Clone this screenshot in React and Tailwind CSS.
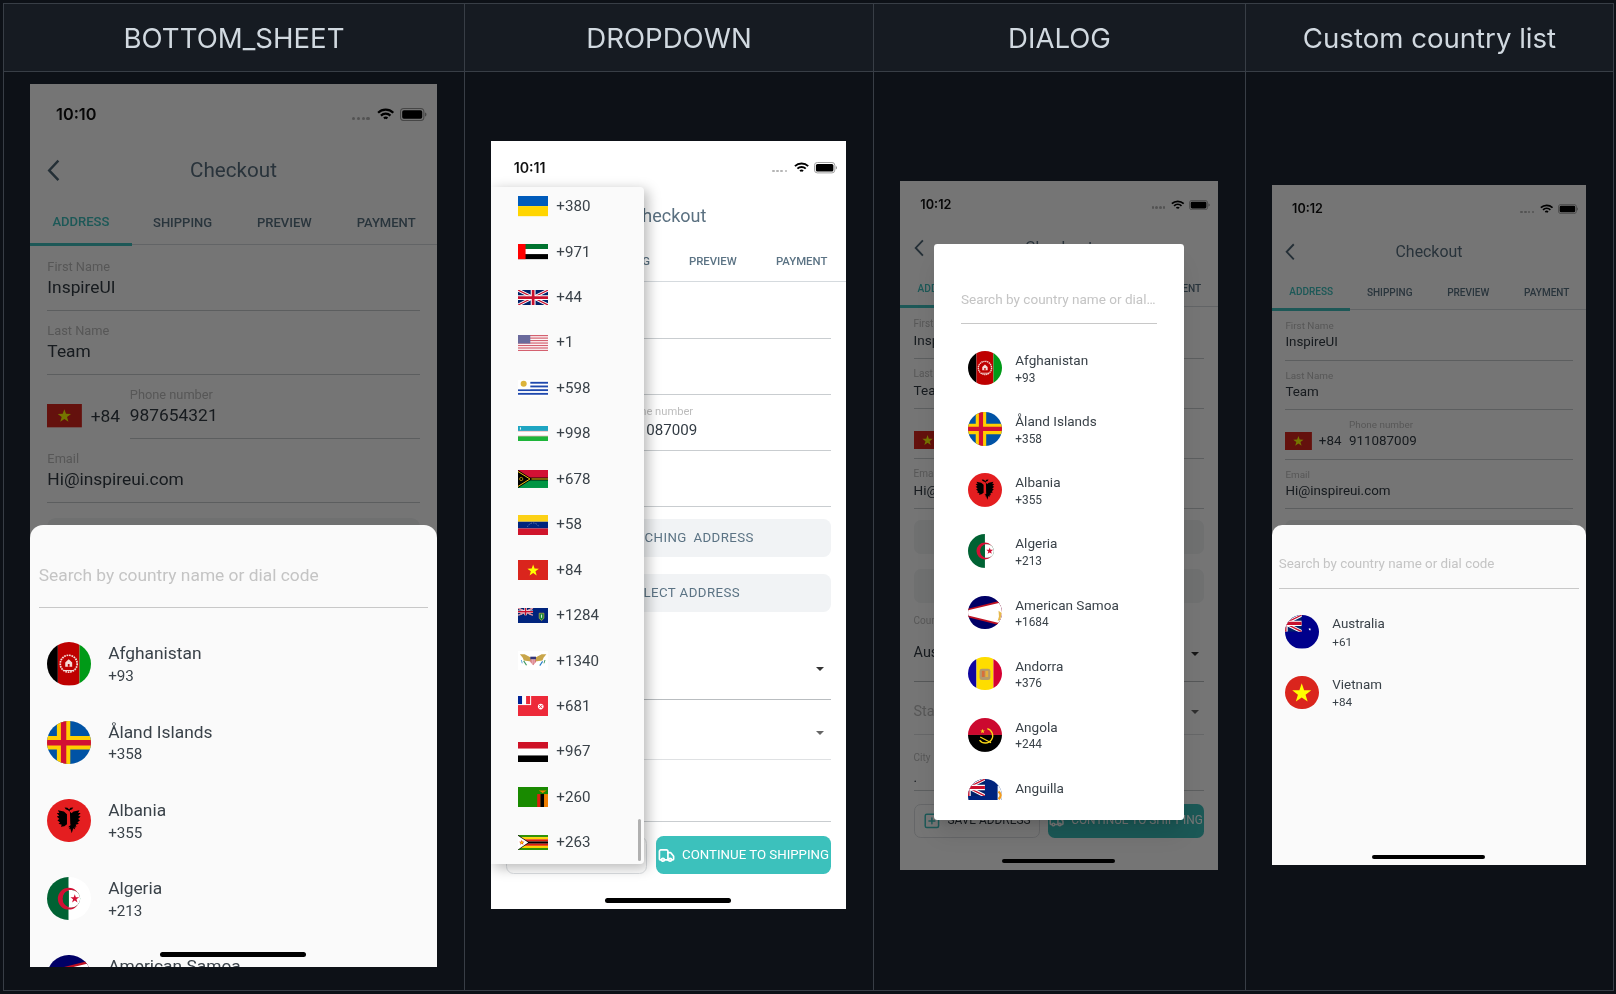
import React from "react";
import { LocateFixed, Map, SquarePlus, Truck } from "lucide-react";

const starPoints = (cx, cy, r) =>
  Array.from({ length: 10 }, (_, i) => {
    const rad = i % 2 === 0 ? r : r * 0.4;
    const a = -Math.PI / 2 + (i * Math.PI) / 5;
    return `${cx + rad * Math.cos(a)},${cy + rad * Math.sin(a)}`;
  }).join(" ");

function UnionJack({ w, h }) {
  return (
    <g>
      <rect width={w} height={h} fill="#012169" />
      <path d={`M0 0L${w} ${h}M${w} 0L0 ${h}`} stroke="#fff" strokeWidth={h * 0.2} />
      <path d={`M0 0L${w} ${h}M${w} 0L0 ${h}`} stroke="#c8102e" strokeWidth={h * 0.08} />
      <path d={`M${w / 2} 0V${h}M0 ${h / 2}H${w}`} stroke="#fff" strokeWidth={h * 0.32} />
      <path d={`M${w / 2} 0V${h}M0 ${h / 2}H${w}`} stroke="#c8102e" strokeWidth={h * 0.18} />
    </g>
  );
}

const EAGLE_WING =
  "M14.2 7L12.8 5.8L10 5.2L10.7 6.4L9.5 6.5L10.6 7.7L9.5 8.1L10.7 9.2L9.8 9.8L11 10.8L10.3 11.4L11.8 11.9L11.4 12.8L13 12.6L14.2 11.6Z";

// [viewBox width, viewBox height, artwork]
const FLAGS = {
  afghanistan: [30, 20, (
    <>
      <rect width="10" height="20" fill="#000" />
      <rect x="10" width="10" height="20" fill="#be0000" />
      <rect x="20" width="10" height="20" fill="#009a17" />
      <circle cx="15" cy="10" r="3.9" fill="none" stroke="#f5dcd8" strokeWidth=".8" strokeDasharray=".8 .35" />
      <path d="M13.4 11.4V9.4l1.6-1.5 1.6 1.5v2z" fill="#f5dcd8" />
      <path d="M14.6 11.4v-1.3h.8v1.3" fill="#be0000" />
      <path d="M12.8 13.1h4.4" stroke="#f5dcd8" strokeWidth=".5" />
    </>
  )],
  aland: [52, 34, (
    <>
      <rect width="52" height="34" fill="#0053a5" />
      <path d="M22 0V34M0 17H52" stroke="#ffce00" strokeWidth="10.5" />
      <path d="M22 0V34M0 17H52" stroke="#d21034" strokeWidth="4.2" />
    </>
  )],
  albania: [30, 20, (
    <>
      <rect width="30" height="20" fill="#e41e20" />
      <path d={EAGLE_WING} fill="#000" />
      <path d={EAGLE_WING} fill="#000" transform="matrix(-1 0 0 1 30 0)" />
      <path d="M14.7 5.2l-1.1-.5-.5-.8 1.3.1.8.8.6-.8 1.3-.1-.5.8-1.1.5.1 1.8.3 5-1.2 1 .8-.1-.3 1 .9-.5-.4.1.7 2.3.7-2.3.9.5-.3-1 .8.1-1.2-1-.2-5z" fill="#000" />
    </>
  )],
  algeria: [30, 20, (
    <>
      <rect width="15" height="20" fill="#006233" />
      <rect x="15" width="15" height="20" fill="#fff" />
      <circle cx="15" cy="10" r="5" fill="#d21034" />
      <circle cx="16.3" cy="10" r="4" fill="#006233" />
      <path d="M16.3 6A4 4 0 0 1 16.3 14H15V6Z" fill="#fff" />
      <path d="M15 6.2A4 4 0 0 0 15 13.8Z" fill="#006233" />
      <polygon points={starPoints(17.8, 10, 2.1)} fill="#d21034" />
    </>
  )],
  samoa: [30, 15, (
    <>
      <rect width="30" height="15" fill="#000066" />
      <polygon points="0,7.5 30,0 30,15" fill="#bd1021" />
      <polygon points="2.5,7.5 30,1 30,14" fill="#fff" />
      <path d="M21 6.5l1.4 1-.6 3-1.2.6.6-2z" fill="#e6b84c" />
    </>
  )],
  andorra: [30, 20, (
    <>
      <rect width="10" height="20" fill="#10069f" />
      <rect x="10" width="10" height="20" fill="#fedd00" />
      <rect x="20" width="10" height="20" fill="#d50032" />
      <rect x="11.8" y="7" width="6.4" height="6.6" rx="1.4" fill="#b59a6a" />
      <rect x="13.2" y="8.2" width="1.6" height="3.6" fill="#d8703a" />
      <rect x="15.3" y="8.2" width="1.6" height="3.6" fill="#e8b03a" />
    </>
  )],
  angola: [30, 20, (
    <>
      <rect width="30" height="10" fill="#cc092f" />
      <rect y="10" width="30" height="10" fill="#000" />
      <path d="M16.4 6.3A4.3 4.3 0 1 1 11.8 13" fill="none" stroke="#f9d616" strokeWidth=".8" />
      <path d="M12.2 11.2L18.6 14.6" stroke="#f9d616" strokeWidth=".7" />
      <polygon points={starPoints(13.6, 7.8, 1.5)} fill="#f9d616" />
    </>
  )],
  anguilla: [30, 15, (
    <>
      <rect width="30" height="15" fill="#00247d" />
      <svg x="0" y="0" width="15" height="7.5"><UnionJack w={15} h={7.5} /></svg>
      <rect x="20.6" y="3" width="4" height="8" fill="#f4f6f8" />
      <path d="M21 5.5c1 1 1.5 2 0 3.4" stroke="#f29b1d" strokeWidth="1" fill="none" />
      <rect x="20.6" y="10" width="4" height="1.4" fill="#b8d6ee" />
    </>
  )],
  australia: [30, 15, (
    <>
      <rect width="30" height="15" fill="#00008b" />
      <svg x="0" y="0" width="15" height="7.5"><UnionJack w={15} h={7.5} /></svg>
      <polygon points={starPoints(18.6, 6.4, 0.7)} fill="#fff" />
    </>
  )],
  vietnam: [30, 20, (
    <>
      <rect width="30" height="20" fill="#da251d" />
      <polygon points={starPoints(15, 10.4, 6)} fill="#ffff00" />
    </>
  )],
  ukraine: [30, 20, (
    <>
      <rect width="30" height="10" fill="#005bbb" />
      <rect y="10" width="30" height="10" fill="#ffd500" />
    </>
  )],
  uae: [32, 16, (
    <>
      <rect width="32" height="5.33" fill="#00732f" />
      <rect y="5.33" width="32" height="5.34" fill="#fff" />
      <rect y="10.67" width="32" height="5.33" fill="#000" />
      <rect width="8" height="16" fill="#ff0000" />
    </>
  )],
  uk: [32, 16, <UnionJack w={32} h={16} />],
  usa: [32, 17, (
    <>
      <rect width="32" height="17" fill="#fff" />
      {[0, 2, 4, 6, 8, 10, 12].map((i) => (
        <rect key={i} y={(i * 17) / 13} width="32" height={17 / 13} fill="#d4606f" />
      ))}
      <rect width="13" height="9" fill="#6a6a9c" />
    </>
  )],
  uruguay: [32, 17.5, (
    <>
      <rect width="32" height="17.5" fill="#fff" />
      {[1.95, 5.85, 9.75, 13.65].map((y) => (
        <rect key={y} y={y} width="32" height="1.95" fill="#1e48ad" />
      ))}
      <rect width="13" height="9.75" fill="#fff" />
      <circle cx="6" cy="4" r="3.2" fill="#dcb43c" />
    </>
  )],
  uzbekistan: [32, 16, (
    <>
      <rect width="32" height="16" fill="#fff" />
      <rect width="32" height="5.2" fill="#1ea5c2" />
      <rect y="10.8" width="32" height="5.2" fill="#1eb53a" />
      <rect y="5.2" width="32" height=".5" fill="#e08a8a" />
      <rect y="10.3" width="32" height=".5" fill="#e08a8a" />
      <rect x="2" y="1.4" width="1.2" height="2.4" fill="#dff2f6" />
    </>
  )],
  vanuatu: [32, 19, (
    <>
      <rect width="32" height="9.5" fill="#d21034" />
      <rect y="9.5" width="32" height="9.5" fill="#009543" />
      <rect y="8" width="32" height="3" fill="#000" />
      <path d="M12 9.5H32" stroke="#fdce12" strokeWidth="1" />
      <polygon points="0,0 15,9.5 0,19" fill="#000" />
      <path d="M0 1.6L12.6 9.5L0 17.4" stroke="#fdce12" strokeWidth="1" fill="none" />
      <circle cx="3.4" cy="9.5" r="1.7" fill="none" stroke="#fdce12" strokeWidth=".7" />
    </>
  )],
  venezuela: [30, 20, (
    <>
      <rect width="30" height="6.67" fill="#fcd116" />
      <rect y="6.67" width="30" height="6.67" fill="#00247d" />
      <rect y="13.33" width="30" height="6.67" fill="#cf142b" />
      <path d="M9.5 11.5A6 6 0 0 1 20.5 11.5" fill="none" stroke="#fff" strokeWidth=".6" strokeDasharray=".6 1.1" />
    </>
  )],
  bvi: [32, 16, (
    <>
      <rect width="32" height="16" fill="#00247d" />
      <svg x="0" y="0" width="16" height="8"><UnionJack w={16} h={8} /></svg>
      <path d="M22.4 5.5h5v5.4l-2.5 2.4-2.5-2.4z" fill="#1b8a3a" stroke="#e6c23a" strokeWidth=".6" />
      <rect x="24.5" y="7" width=".9" height="3.4" fill="#fff" />
    </>
  )],
  usvi: [32, 20, (
    <>
      <rect width="32" height="20" fill="#fff" />
      <path d="M13.5 7L7 3.4L2 3.4L5 7.2L6.2 10L10 10.5L13.5 11Z" fill="#c9a64b" />
      <path d="M18.5 7L25 3.4L30 3.4L27 7.2L25.8 10L22 10.5L18.5 11Z" fill="#c9a64b" />
      <rect x="13" y="6" width="6" height="3" fill="#33367a" />
      <path d="M13 9h6v2.6L16 15l-3-3.4z" fill="#d6707a" />
      <path d="M15 9v5M17 9v4.5" stroke="#fff" strokeWidth=".6" />
      <path d="M6 10.5L9 15" stroke="#3f9a62" strokeWidth="1.2" />
      <path d="M26 11L23 15.5" stroke="#2a80c8" strokeWidth="1.2" />
      <path d="M3.5 9.5L4.5 13" stroke="#5aa6d8" strokeWidth="1" />
      <path d="M28.5 9.5L27.5 13" stroke="#3f9a62" strokeWidth="1" />
    </>
  )],
  wallis: [30, 20, (
    <>
      <rect width="30" height="20" fill="#ed2939" />
      <rect width="13" height="9" fill="#fff" />
      <rect width="4" height="8" fill="#002395" />
      <rect x="8" width="4" height="8" fill="#ed2939" />
      <circle cx="22.5" cy="10.5" r="2.8" fill="#fff" />
      <path d="M20.8 8.8L24.2 12.2M24.2 8.8L20.8 12.2" stroke="#ed2939" strokeWidth=".9" />
    </>
  )],
  yemen: [30, 20, (
    <>
      <rect width="30" height="6.67" fill="#ce1126" />
      <rect y="6.67" width="30" height="6.67" fill="#fff" />
      <rect y="13.33" width="30" height="6.67" fill="#000" />
    </>
  )],
  zambia: [30, 20, (
    <>
      <rect width="30" height="20" fill="#198a00" />
      <rect x="19" y="7" width="3.4" height="13" fill="#de2010" />
      <rect x="22.4" y="7" width="3.4" height="13" fill="#000" />
      <rect x="25.8" y="7" width="4.2" height="13" fill="#ef7d00" />
      <path d="M20.5 3.5h8l-3 1.6-1 1.2-1-1.2z" fill="#ef7d00" />
    </>
  )],
  zimbabwe: [32, 16, (
    <>
      {["#319208", "#ffd200", "#de2010", "#000", "#de2010", "#ffd200", "#319208"].map((c, i) => (
        <rect key={i} y={(i * 16) / 7} width="32" height={16 / 7 + 0.05} fill={c} />
      ))}
      <polygon points="0,0 12,8 0,16" fill="#000" />
      <polygon points="0,.8 10.8,8 0,15.2" fill="#fff" />
      <polygon points={starPoints(4, 8, 3)} fill="#de2010" />
      <circle cx="4" cy="8" r="1.2" fill="#ffd200" />
    </>
  )],
};

function Flag({ code, className }) {
  const [w, h, art] = FLAGS[code];
  return (
    <svg viewBox={`0 0 ${w} ${h}`} preserveAspectRatio="xMidYMid slice" className={className}>
      {art}
    </svg>
  );
}

const SHEET_COUNTRIES = [
  ["afghanistan", "Afghanistan", "+93"],
  ["aland", "Åland Islands", "+358"],
  ["albania", "Albania", "+355"],
  ["algeria", "Algeria", "+213"],
  ["samoa", "American Samoa", "+1684"],
  ["andorra", "Andorra", "+376"],
  ["angola", "Angola", "+244"],
  ["anguilla", "Anguilla", "+1264"],
];

const CUSTOM_COUNTRIES = [
  ["australia", "Australia", "+61"],
  ["vietnam", "Vietnam", "+84"],
];

const DROPDOWN_COUNTRIES = [
  ["ukraine", "+380"],
  ["uae", "+971"],
  ["uk", "+44"],
  ["usa", "+1"],
  ["uruguay", "+598"],
  ["uzbekistan", "+998"],
  ["vanuatu", "+678"],
  ["venezuela", "+58"],
  ["vietnam", "+84"],
  ["bvi", "+1284"],
  ["usvi", "+1340"],
  ["wallis", "+681"],
  ["yemen", "+967"],
  ["zambia", "+260"],
  ["zimbabwe", "+263"],
];

function StatusBar({ time }) {
  return (
    <div className="h-[45px] pt-[19px] pl-[24px] pr-[9px] flex items-start justify-between">
      <span className="font-['Inter',sans-serif] text-[15px] leading-[20px] font-semibold text-[#111]">{time}</span>
      <div className="flex items-center gap-[5px] h-[20px]">
        <div className="flex gap-[1.5px] mt-[6px] mr-[2px]">
          <span className="w-[3px] h-[3px] rounded-full bg-[#b5b5b5]" />
          <span className="w-[3px] h-[3px] rounded-full bg-[#b5b5b5]" />
          <span className="w-[3px] h-[3px] rounded-full bg-[#b5b5b5]" />
          <span className="w-[3px] h-[3px] rounded-full bg-[#b5b5b5]" />
        </div>
        <svg viewBox="0 0 16 12" className="w-[16px] h-[12px]" fill="none" stroke="#000" strokeWidth="2">
          <path d="M1 4.4a10 10 0 0 1 14 0" />
          <path d="M3.6 7a6.4 6.4 0 0 1 8.8 0" />
          <path d="M6.4 9.6a2.4 2.4 0 0 1 3.2 0" />
        </svg>
        <svg viewBox="0 0 25 12" className="w-[25px] h-[12px]">
          <rect x=".5" y=".5" width="21.5" height="11" rx="3" fill="none" stroke="#9a9a9a" />
          <rect x="2" y="2" width="18.5" height="8" rx="1.6" fill="#000" />
          <path d="M23 4.2c1 .3 1.4 1 1.4 1.8s-.4 1.5-1.4 1.8z" fill="#9a9a9a" />
        </svg>
      </div>
    </div>
  );
}

function Field({ label, value }) {
  return (
    <div className="h-[59px] mx-4 flex flex-col justify-end pb-[9.5px] border-b border-[#c9cdd0]">
      <span className="text-[11.8px] leading-[18px] text-[#bdbdbd]">{label}</span>
      <span className="text-[16px] leading-[22px] text-[#333c44]">{value}</span>
    </div>
  );
}

// shortLine: the phone field's underline starts at the field, not under the dial code
function Checkout({ time, number, shortLine, selectorClass }) {
  return (
    <>
      <StatusBar time={time} />
      <div className="h-[68px] pt-[2px] relative flex items-center justify-center">
        <svg viewBox="0 0 12 21" className="absolute left-[16px] w-[12px] h-[21px]" fill="none" stroke="#4f6777" strokeWidth="2.2">
          <path d="M10.5 1.5L2 10.5L10.5 19.5" />
        </svg>
        <span className="text-[19px] text-[#5a7080]">Checkout</span>
      </div>
      <div className="h-[36px] grid grid-cols-4 border-b border-[#d5dade] text-[12px] font-medium text-[#5b7384]">
        <div className="relative h-[36px] pt-[5px] text-center text-[#3fc1be]">
          ADDRESS
          <span className="absolute left-0 right-0 bottom-[-1px] h-[3px] bg-[#3fc1be]" />
        </div>
        <div className="pt-[6px] text-center">SHIPPING</div>
        <div className="pt-[6px] text-center">PREVIEW</div>
        <div className="pt-[6px] text-center">PAYMENT</div>
      </div>
      <div className="mt-[2px]">
        <Field label="First Name" value="InspireUI" />
        <Field label="Last Name" value="Team" />
        <div className={`h-[59px] mx-4 flex ${shortLine ? "" : "border-b border-[#c9cdd0]"}`}>
          <div className={`${selectorClass} shrink-0 flex items-center gap-2 pt-[16px]`}>
            <Flag code="vietnam" className="w-8 h-[21.5px] shrink-0" />
            <span className="text-[16px] text-[#333c44]">+84</span>
          </div>
          <div className={`flex-1 flex flex-col justify-end pb-[9.5px] ${shortLine ? "border-b border-[#c9cdd0]" : ""}`}>
            <span className="text-[11.8px] leading-[18px] text-[#bdbdbd]">Phone number</span>
            <span className="text-[16px] leading-[22px] text-[#333c44]">{number}</span>
          </div>
        </div>
        <Field label="Email" value="Hi@inspireui.com" />
      </div>
      <div className="mx-4 mt-[13px] h-10 pr-[3px] rounded-lg bg-[#f1f3f5] flex items-center justify-center gap-[14px] text-[14px] tracking-[0.45px] [word-spacing:3px] text-[#5b7384]">
        <LocateFixed className="w-[18px] h-[18px]" />
        SEARCHING ADDRESS
      </div>
      <div className="mx-4 mt-[18px] h-10 rounded-lg bg-[#f1f3f5] flex items-center justify-center gap-[14px] text-[14px] tracking-[0.45px] text-[#5b7384]">
        <Map className="w-[18px] h-[18px]" />
        SELECT ADDRESS
      </div>
      <div className="mx-4 h-[93px] pt-[12px] border-b border-[#b9bdc0] relative">
        <span className="block text-[11.8px] leading-[18px] text-[#bdbdbd]">Country</span>
        <span className="block mt-[18px] text-[17px] leading-[24px] text-[#333c44]">Australia</span>
        <span className="absolute right-[7px] top-[58px] border-x-[5px] border-x-transparent border-t-[5px] border-t-[#333]" />
      </div>
      <div className="mx-4 h-[63px] pt-[24px] border-b border-[#dfe1e3] relative">
        <span className="block text-[17px] leading-[24px] text-[#bdbdbd]">State</span>
        <span className="absolute right-[7px] top-[33px] border-x-[5px] border-x-transparent border-t-[5px] border-t-[#666]" />
      </div>
      <div className="mx-4 h-[66px] pt-[18px] border-b border-[#c9cdd0]">
        <span className="block text-[11.8px] leading-[18px] text-[#bdbdbd]">City</span>
        <span className="block text-[16px] leading-[22px] mt-[3px] text-[#333c44]">.</span>
      </div>
      <div className="mx-4 mt-[15px] h-10 flex gap-[9px]">
        <div className="w-[149px] rounded-lg border border-[#dcdfe2] flex items-center justify-center gap-2 text-[14px] text-[#333c44]">
          <SquarePlus className="w-[21px] h-[21px] text-[#3fc1be]" />
          SAVE ADDRESS
        </div>
        <div className="flex-1 rounded-lg bg-[#3cc1bc] flex items-center justify-center gap-2 text-[14px] text-white whitespace-nowrap">
          <Truck className="w-[18px] h-[18px] shrink-0" strokeWidth={2.4} />
          CONTINUE TO SHIPPING
        </div>
      </div>
    </>
  );
}

function CountryRow({ code, name, dial, rowClass }) {
  return (
    <div className={`h-[72px] flex items-center gap-4 shrink-0 ${rowClass}`}>
      <Flag code={code} className="w-10 h-10 rounded-full shrink-0" />
      <div className="mt-[2px] flex flex-col">
        <span className="text-[16px] leading-[22px] text-[#3a4249]">{name}</span>
        <span className="text-[14px] leading-[20px] text-[#3a4249]">{dial}</span>
      </div>
    </div>
  );
}

function BottomSheet({ countries, topClass }) {
  return (
    <>
      <div className="absolute inset-0 bg-black/54" />
      <div className={`absolute left-0 right-0 bottom-0 rounded-t-[12px] bg-[#fafafa] overflow-hidden ${topClass}`}>
        <div className="mx-2 h-[76px] pt-[37px] border-b border-[#c8c8c8] text-[16px] leading-[20px] text-[#c4c4c4]">
          Search by country name or dial code
        </div>
        <div className="pt-[16px] flex flex-col">
          {countries.map(([code, name, dial]) => (
            <CountryRow key={code} code={code} name={name} dial={dial} rowClass="pl-4" />
          ))}
        </div>
      </div>
    </>
  );
}

function DialogPicker() {
  return (
    <>
      <div className="absolute inset-0 bg-black/54" />
      <div className="absolute left-[40px] top-[74.5px] w-[295px] h-[680px] rounded-[4px] bg-white shadow-xl">
        <div className="mx-[32px] h-[95px] pt-[56px] border-b border-[#c8c8c8] text-[16px] leading-[20px] text-[#c4c4c4] truncate">
          Search by country name or dial code
        </div>
        <div className="mt-[16px] h-[545px] overflow-hidden flex flex-col">
          {SHEET_COUNTRIES.map(([code, name, dial]) => (
            <CountryRow key={code} code={code} name={name} dial={dial} rowClass="pl-10" />
          ))}
        </div>
      </div>
    </>
  );
}

function DropdownPicker() {
  return (
    <div className="absolute left-0 top-[48.6px] w-[162px] h-[715px] rounded-r-[4px] bg-[#fafafa] overflow-hidden shadow-[4px_4px_14px_rgba(0,0,0,0.28)]">
      <div className="mt-[-3px] flex flex-col">
        {DROPDOWN_COUNTRIES.map(([code, dial]) => (
          <div key={code} className="h-[48px] pl-[28px] flex items-center gap-[9px] shrink-0">
            <Flag code={code} className="w-8 h-auto shrink-0" />
            <span className="text-[16px] text-[#3a4249]">{dial}</span>
          </div>
        ))}
      </div>
      <span className="absolute left-[155px] top-[668px] h-[44px] w-[3px] rounded-full bg-[#b0b0b0]" />
    </div>
  );
}

function HomeBar() {
  return <span className="absolute left-[120px] top-[800px] w-[134px] h-[5px] rounded-full bg-black" />;
}

const SCREEN = "relative w-[375px] overflow-hidden bg-white font-['Roboto',sans-serif]";

const COLUMNS = [
  {
    title: "BOTTOM_SHEET",
    screen: (
      <div className={`${SCREEN} h-[813.6px] [zoom:1.0853]`}>
        <Checkout time="10:10" number="987654321" shortLine selectorClass="w-[76px]" />
        <BottomSheet countries={SHEET_COUNTRIES} topClass="top-[407px]" />
        <HomeBar />
      </div>
    ),
  },
  {
    title: "DROPDOWN",
    screen: (
      <div className={`${SCREEN} h-[812px] [zoom:0.9467]`}>
        <Checkout time="10:11" number="911087009" selectorClass="w-[121px]" />
        <DropdownPicker />
        <HomeBar />
      </div>
    ),
  },
  {
    title: "DIALOG",
    screen: (
      <div className={`${SCREEN} h-[812.5px] [zoom:0.848]`}>
        <Checkout time="10:12" number="911087009" selectorClass="w-[76px]" />
        <HomeBar />
        <DialogPicker />
      </div>
    ),
  },
  {
    title: "Custom country list",
    screen: (
      <div className={`${SCREEN} h-[812px] [zoom:0.8373]`}>
        <Checkout time="10:12" number="911087009" selectorClass="w-[76px]" />
        <BottomSheet countries={CUSTOM_COUNTRIES} topClass="top-[406px]" />
        <HomeBar />
      </div>
    ),
  },
];

export default function App() {
  return (
    <div className="w-[1616px] h-[994px] overflow-hidden bg-[#0d1117] p-[3px] blur-[0.4px]">
      <div className="w-[1611px] h-[988px] border-l border-t border-[#383e46] grid grid-cols-[461px_409px_372px_368px] grid-rows-[68px_1fr] font-['Inter',sans-serif]">
        {COLUMNS.map((col) => (
          <div key={col.title} className="border-r border-b border-[#383e46] bg-[#161b22] pt-[3px] flex items-center justify-center text-[27.6px] text-[#d1d9e0]">
            {col.title}
          </div>
        ))}
        {COLUMNS.map((col) => (
          <div key={col.title} className="border-r border-b border-[#383e46] pb-[12px] pr-[1px] flex items-center justify-center">
            {col.screen}
          </div>
        ))}
      </div>
    </div>
  );
}
